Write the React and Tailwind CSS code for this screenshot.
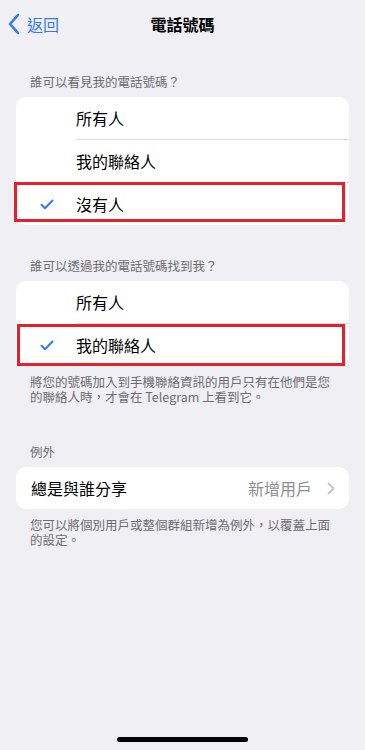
import React from 'react';

const FONT = { fontFamily: '"Noto Sans CJK TC", "Noto Sans", Inter, sans-serif' };

const Check = () => (
  <svg width="14" height="11" viewBox="0 0 14 11" fill="none">
    <path d="M1.5 5.8 L5 9.2 L12.5 1.5" stroke="#3478f6" strokeWidth="2" strokeLinecap="round" strokeLinejoin="round" />
  </svg>
);

const Row = ({ label, checked, box }) => (
  <div className="relative h-[42px] flex items-center">
    <div className="w-[60px] flex justify-center pl-[2px]">{checked && <Check />}</div>
    <span className="text-[16px] text-black">{label}</span>
    {box && <div className={`absolute border-[3px] border-[#e61f2a] ${box}`} />}
  </div>
);

const Sep = () => <div className="ml-[60px] h-px bg-[#dcdce0]" />;

const Header = ({ children, pt }) => (
  <div className={`px-[30px] ${pt} pb-[7px] text-[12.5px] leading-[16px] text-[#6d6d72]`}>{children}</div>
);

const Footer = ({ children }) => (
  <div className="px-[30px] pt-[8px] pr-[32px] text-[12.5px] leading-[15px] text-[#6d6d72]">{children}</div>
);

export default function App() {
  return (
    <div className="min-h-[750px] bg-[#efeff4] flex flex-col" style={FONT}>
      <div className="relative h-[48px] flex items-center">
        <div className="flex items-center pl-[8px] gap-[7px] text-[#3478f6]">
          <svg width="12" height="22" viewBox="0 0 12 22" fill="none">
            <path d="M10 2 L2 11 L10 20" stroke="#3478f6" strokeWidth="2.6" strokeLinecap="round" strokeLinejoin="round" />
          </svg>
          <span className="text-[16px]">返回</span>
        </div>
        <div className="absolute inset-x-0 text-center text-[16px] font-bold text-black pointer-events-none">電話號碼</div>
      </div>

      <Header pt="pt-[26px]">誰可以看見我的電話號碼？</Header>
      <div className="mx-[16px] bg-white rounded-[10px]">
        <Row label="所有人" />
        <Sep />
        <Row label="我的聯絡人" />
        <Sep />
        <Row label="沒有人" checked box="-left-[2px] -top-[1px] right-[4px] bottom-[3px]" />
      </div>

      <Header pt="pt-[33px]">誰可以透過我的電話號碼找到我？</Header>
      <div className="mx-[16px] bg-white rounded-[10px]">
        <Row label="所有人" />
        <Sep />
        <Row label="我的聯絡人" checked box="left-[1px] top-0 right-[4px] bottom-0" />
      </div>
      <Footer>將您的號碼加入到手機聯絡資訊的用戶只有在他們是您的聯絡人時，才會在 Telegram 上看到它。</Footer>

      <Header pt="pt-[40px]">例外</Header>
      <div className="mx-[16px] bg-white rounded-[10px] h-[42px] flex items-center pl-[15px] pr-[14px]">
        <span className="text-[16px] text-black flex-1">總是與誰分享</span>
        <span className="text-[16px] text-[#8e8e93]">新增用戶</span>
        <svg className="ml-[15px]" width="8" height="13" viewBox="0 0 8 13" fill="none">
          <path d="M1.5 1.5 L6.5 6.5 L1.5 11.5" stroke="#c4c4c7" strokeWidth="1.8" strokeLinecap="round" strokeLinejoin="round" />
        </svg>
      </div>
      <Footer>您可以將個別用戶或整個群組新增為例外，以覆蓋上面的設定。</Footer>

      <div className="flex-1" />
      <div className="flex justify-center pb-[8px]">
        <div className="w-[131px] h-[5px] rounded-full bg-black" />
      </div>
    </div>
  );
}
